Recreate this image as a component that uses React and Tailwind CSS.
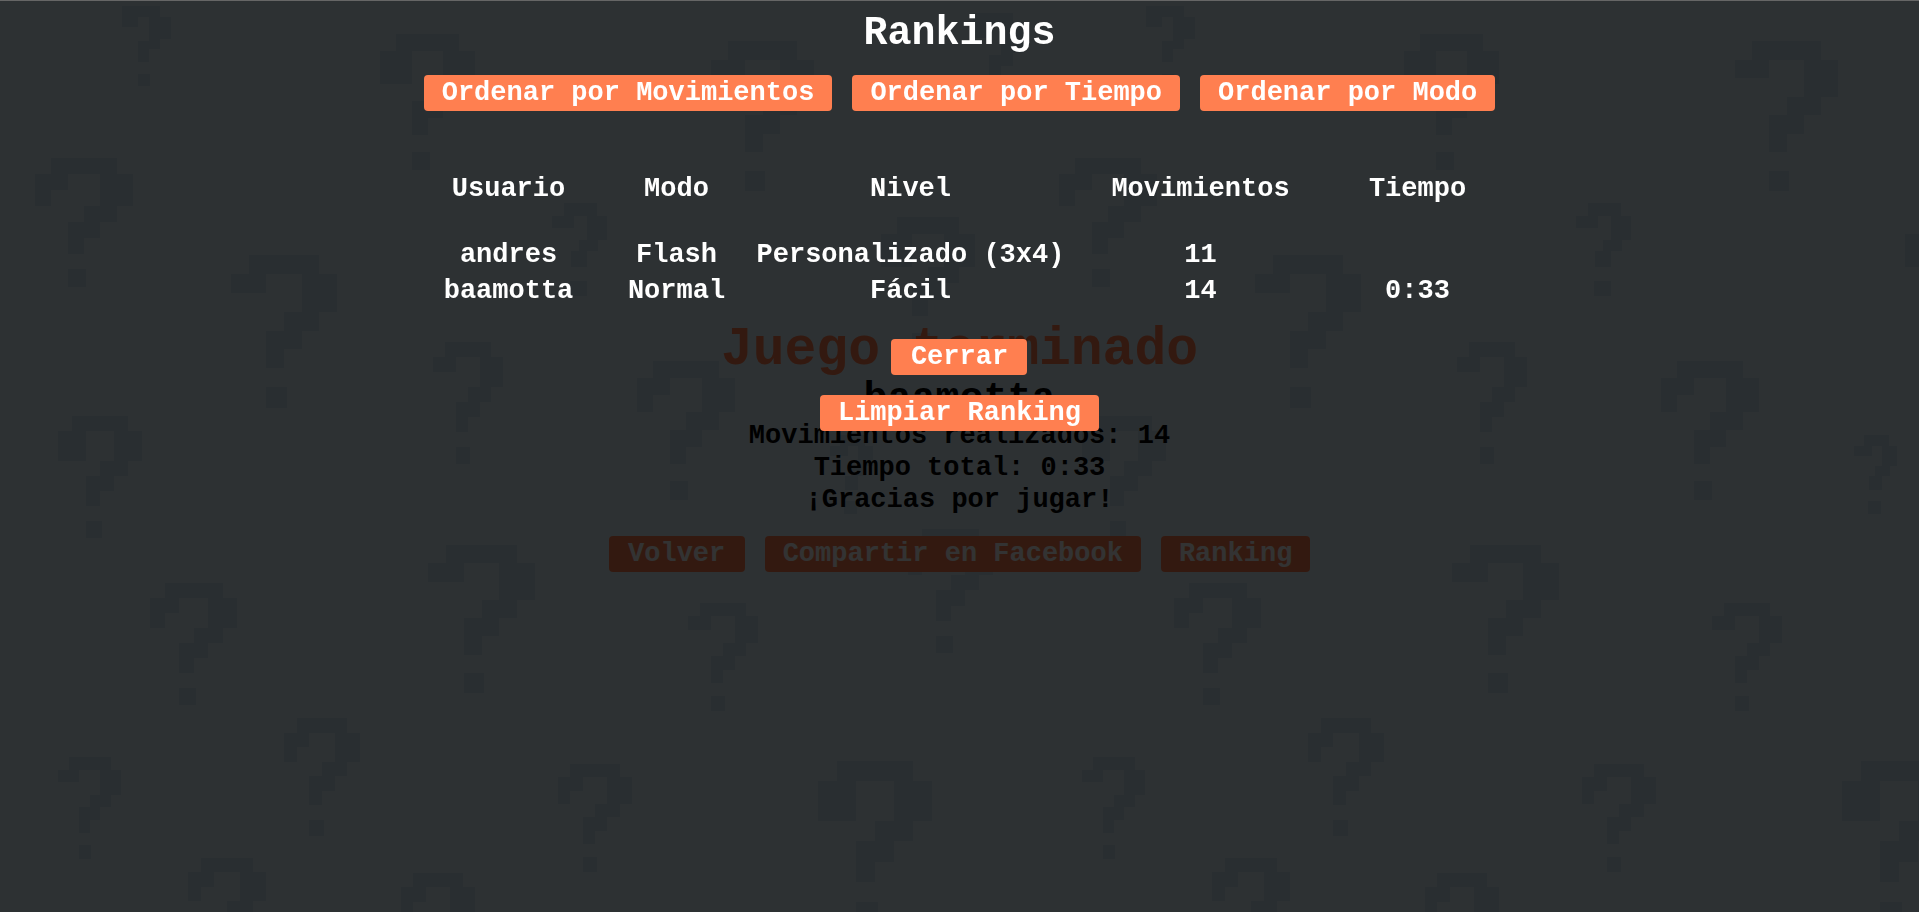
import { useState } from "react";

const SHAPES = {
  // single-cell hook
  short:
    "M1 0h4v1h1v2h-1v1h-1v1h-1v1h-1v-2h1v-1h1v-2h-2v1h-2v-1h1zM2 7h1.15v1.1h-1.15z",
  // hook with a narrow drop
  hook: "M1 0h4v1h1v2h-1v1h-1v1h-1v1h-1v-2h1v-1h1v-2h-2v1h-1v1h-1v-2h1zM2 7h1.15v1.1h-1.15z",
  // hook with a thick drop
  thick: "M1 0h4v1h1v2h-1v1h-1v1h-1v1h-1v-2h1v-1h1v-2h-2v2h-2v-2h1zM2 7h1.15v1.1h-1.15z",
  // small mark with a stubby stem
  stub: "M1.3 0h3.5v1.1h1.1v2.1h-1v1h-1.1v1.4h-1.8v-1.4h.9v-1h.9v-2.1h-1.4v1.1h-2.4v-1.1h1.3zM1.9 6.8h1.8v1.3h-1.8z",
  // mark without the indented corner
  flat: "M0 0h4.7v1.1h1.3v2.2h-1.3v1.1h-1.4v1.3h-1.4v-2.2h1.4v-2.4h-1.4v1h-1.9zM1.9 6.9h1.5v1.2h-1.5z",
};

const MARKS = [
  [122, 6, 49, 80, "flat"],
  [380, 34, 95, 136, "thick"],
  [35, 158, 98, 129, "hook"],
  [231, 255, 106, 153, "short"],
  [552, 203, 56, 93, "stub"],
  [433, 342, 70, 122, "short"],
  [58, 416, 84, 122, "thick"],
  [150, 583, 87, 122, "hook"],
  [428, 545, 107, 148, "short"],
  [284, 718, 76, 118, "hook"],
  [58, 757, 63, 102, "short"],
  [558, 764, 74, 108, "hook"],
  [188, 858, 78, 116, "hook"],
  [401, 873, 74, 116, "hook"],
  [711, 41, 103, 150, "short"],
  [973, 13, 51, 98, "flat"],
  [881, 217, 94, 134, "thick"],
  [637, 361, 98, 139, "hook"],
  [830, 435, 44, 79, "stub"],
  [688, 603, 70, 108, "short"],
  [908, 529, 85, 124, "hook"],
  [818, 761, 114, 163, "thick"],
];

function QuestionBackdrop() {
  return (
    <svg className="absolute inset-0 size-full" aria-hidden="true" shapeRendering="crispEdges">
      <defs>
        <pattern id="marks" width="1024" height="1024" patternUnits="userSpaceOnUse">
          {MARKS.map(([x, y, w, h, shape]) => (
            <path
              key={`${x}-${y}`}
              d={SHAPES[shape]}
              fill="#cde4f2"
              transform={`translate(${x} ${y}) scale(${w / 6} ${h / 8.1})`}
            />
          ))}
        </pattern>
      </defs>
      <rect width="100%" height="100%" fill="url(#marks)" />
    </svg>
  );
}

function Button({ children, onClick }) {
  return (
    <button
      type="button"
      onClick={onClick}
      className="h-9 min-w-[136px] rounded-sm bg-[#ff7f50] px-[18px] text-center text-[27px] leading-9 font-bold whitespace-nowrap text-white"
    >
      {children}
    </button>
  );
}

const SCORES = [
  { user: "andres", mode: "Flash", level: "Personalizado (3x4)", moves: 11, time: "" },
  { user: "baamotta", mode: "Normal", level: "Fácil", moves: 14, time: "0:33" },
];

function GameOver({ onRanking }) {
  return (
    <main className="relative flex flex-col items-center pt-80 text-center text-[27px] leading-8 font-bold text-black">
      <h1 className="text-[53px] leading-[60px] font-bold text-[#ff7f50]">Juego terminado</h1>
      <h2 className="text-[40px] leading-10 font-bold">baamotta</h2>
      <p>Movimientos realizados: 14</p>
      <p>Tiempo total: 0:33</p>
      <p>¡Gracias por jugar!</p>
      <div className="mt-5 flex justify-center gap-5">
        <Button>Volver</Button>
        <Button>Compartir en Facebook</Button>
        <Button onClick={onRanking}>Ranking</Button>
      </div>
    </main>
  );
}

function RankingDialog({ scores, onSort, onClose, onClear }) {
  return (
    <section
      role="dialog"
      aria-labelledby="ranking-title"
      className="fixed inset-0 flex flex-col items-center overflow-auto border-t border-[#666] bg-black/80 pt-[13px] text-white"
    >
      <h2 id="ranking-title" className="text-[40px] leading-10 font-bold">
        Rankings
      </h2>
      <div className="mt-[21px] flex justify-center gap-5">
        <Button onClick={() => onSort("moves")}>Ordenar por Movimientos</Button>
        <Button onClick={() => onSort("time")}>Ordenar por Tiempo</Button>
        <Button onClick={() => onSort("mode")}>Ordenar por Modo</Button>
      </div>
      <table className="mt-[60px] table-fixed text-center text-[27px] leading-9 font-bold">
        <colgroup>
          <col className="w-[184px]" />
          <col className="w-[152px]" />
          <col className="w-[316px]" />
          <col className="w-[264px]" />
          <col className="w-[170px]" />
        </colgroup>
        <thead>
          <tr>
            <th className="p-0 pb-[30px]">Usuario</th>
            <th className="p-0 pb-[30px]">Modo</th>
            <th className="p-0 pb-[30px]">Nivel</th>
            <th className="p-0 pb-[30px]">Movimientos</th>
            <th className="p-0 pb-[30px]">Tiempo</th>
          </tr>
        </thead>
        <tbody>
          {scores.map((s) => (
            <tr key={s.user}>
              <td className="p-0">{s.user}</td>
              <td className="p-0">{s.mode}</td>
              <td className="p-0 whitespace-nowrap">{s.level}</td>
              <td className="p-0">{s.moves}</td>
              <td className="p-0">{s.time}</td>
            </tr>
          ))}
        </tbody>
      </table>
      <div className="mt-[30px] flex flex-col items-center gap-5">
        <Button onClick={onClose}>Cerrar</Button>
        <Button onClick={onClear}>Limpiar Ranking</Button>
      </div>
    </section>
  );
}

export default function App() {
  const [open, setOpen] = useState(true);
  const [scores, setScores] = useState(SCORES);
  const sortBy = (key) =>
    setScores([...scores].sort((a, b) => (a[key] > b[key] ? 1 : a[key] < b[key] ? -1 : 0)));

  return (
    <div className="relative min-h-screen overflow-hidden bg-[#e1f3ff] font-['Liberation_Mono',monospace]">
      <QuestionBackdrop />
      <GameOver onRanking={() => setOpen(true)} />
      {open && (
        <RankingDialog
          scores={scores}
          onSort={sortBy}
          onClose={() => setOpen(false)}
          onClear={() => setScores([])}
        />
      )}
    </div>
  );
}
